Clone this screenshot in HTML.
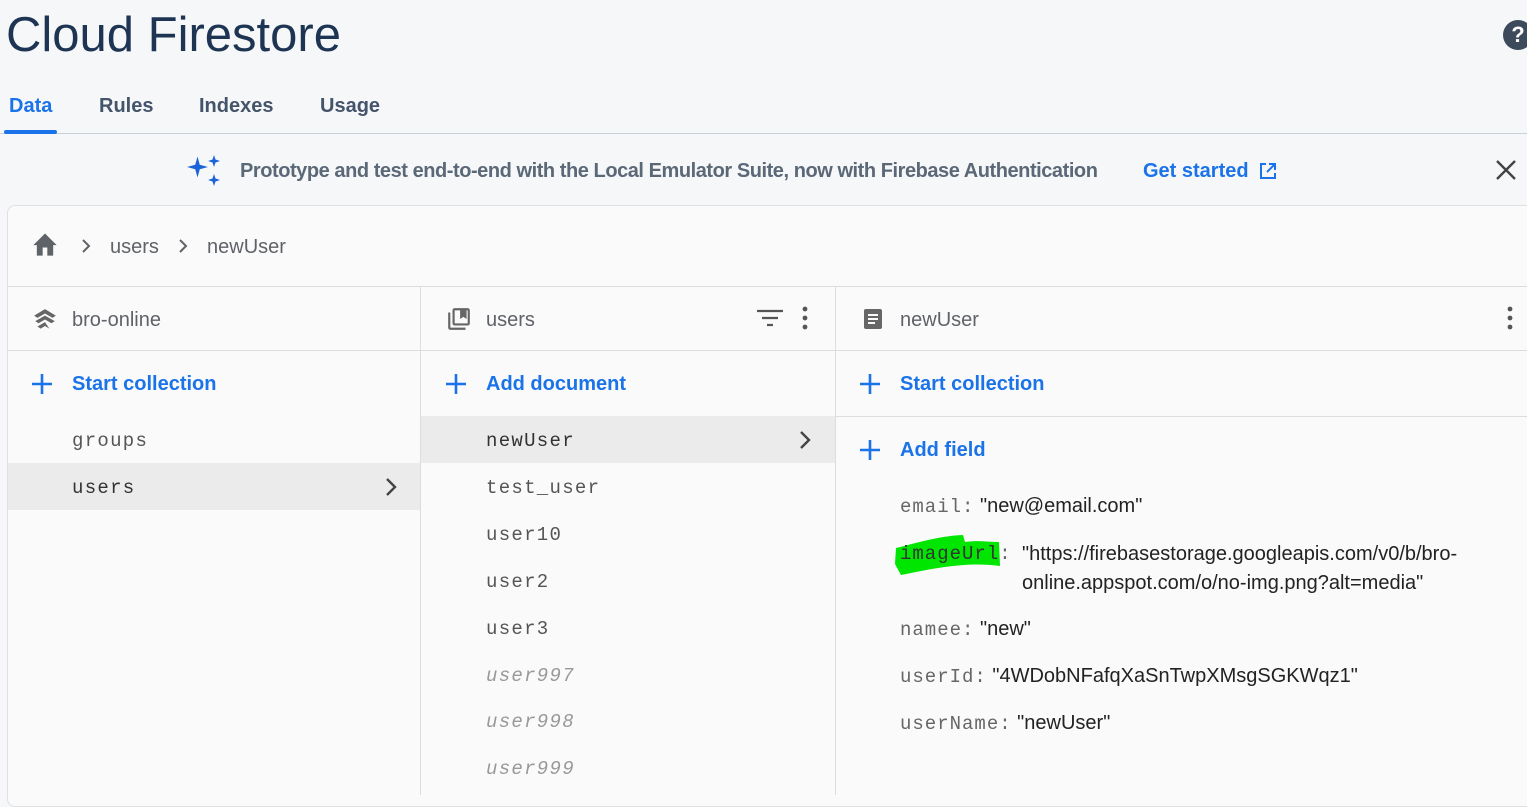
<!DOCTYPE html><html><head><style>
body{margin:0;width:1527px;height:795px;overflow:hidden;background:#f6f7f9;font-family:"Liberation Sans",sans-serif;position:relative}
.a{position:absolute;white-space:nowrap}
.mono{font-family:"Liberation Mono",monospace;font-size:19px;letter-spacing:1.3px;color:#333}
.blue{color:#1a73e8;font-size:20px}
.gray{color:#5f6368}
</style></head><body>
<div class="a" style="left:6px;top:7px;font-size:49px;color:#1d3553">Cloud Firestore</div>
<div class="a" style="left:1503px;top:20px;width:30px;height:30px;border-radius:50%;background:#3c4a5c;color:#fff;font-weight:bold;font-size:22px;text-align:center;line-height:30px">?</div>
<div class="a" style="left:9px;top:95px;font-size:20px;color:#1a73e8;font-weight:bold">Data</div>
<div class="a" style="left:99px;top:95px;font-size:20px;color:#44546a;font-weight:bold">Rules</div>
<div class="a" style="left:199px;top:95px;font-size:20px;color:#44546a;font-weight:bold">Indexes</div>
<div class="a" style="left:320px;top:95px;font-size:20px;color:#44546a;font-weight:bold">Usage</div>
<div class="a" style="left:0;top:133px;width:1527px;height:1px;background:#c9d2dc"></div>
<div class="a" style="left:4px;top:130px;width:53px;height:4px;background:#1a73e8;border-radius:2px"></div>
<svg class="a" style="left:187px;top:153px" width="36" height="34" viewBox="0 0 36 34"><path d="M14 2 L17 13 L28 16 L17 19 L14 30 L11 19 L0 16 L11 13Z" fill="#1a63d8" transform="translate(0,2) scale(.75)"/><path d="M27 2 L28.5 6.5 L33 8 L28.5 9.5 L27 14 L25.5 9.5 L21 8 L25.5 6.5Z" fill="#1a63d8"/><path d="M27 21 L28.5 25.5 L33 27 L28.5 28.5 L27 33 L25.5 28.5 L21 27 L25.5 25.5Z" fill="#1a63d8"/></svg>
<div class="a" style="left:240px;top:160px;font-size:20px;color:#5b6877;font-weight:bold;letter-spacing:-.45px">Prototype and test end-to-end with the Local Emulator Suite, now with Firebase Authentication</div>
<div class="a" style="left:1143px;top:160px;font-size:20px;color:#1a73e8;font-weight:bold">Get started</div>
<svg class="a" style="left:1258px;top:161px" width="20" height="20" viewBox="0 0 20 20" fill="none" stroke="#1a73e8" stroke-width="2"><path d="M8 3H3v14h14v-5M11 3h6v6M17 3L9 11"/></svg>
<svg class="a" style="left:1495px;top:159px" width="22" height="22" stroke="#444" stroke-width="2.4"><path d="M2 2L20 20M20 2L2 20"/></svg>
<div class="a" style="left:7px;top:205px;width:1530px;height:600px;background:#fafafa;border:1px solid #e0e0e0;border-radius:8px"></div>
<svg class="a" style="left:31px;top:231px" width="28" height="26" viewBox="0 0 24 22"><path d="M10 21v-7h4v7h5v-9h3L12 2 2 12h3v9z" fill="#5f6368"/></svg>
<svg class="a" style="left:81px;top:239px" width="10" height="14" fill="none" stroke="#5f6368" stroke-width="2"><path d="M2 1l6 6-6 6"/></svg>
<div class="a gray" style="left:110px;top:236px;font-size:20px">users</div>
<svg class="a" style="left:178px;top:239px" width="10" height="14" fill="none" stroke="#5f6368" stroke-width="2"><path d="M2 1l6 6-6 6"/></svg>
<div class="a gray" style="left:207px;top:236px;font-size:20px">newUser</div>
<div class="a" style="left:8px;top:286px;width:1519px;height:1px;background:#ddd"></div>
<div class="a" style="left:8px;top:350px;width:1519px;height:1px;background:#ddd"></div>
<div class="a" style="left:420px;top:287px;width:1px;height:508px;background:#ddd"></div>
<div class="a" style="left:835px;top:287px;width:1px;height:508px;background:#ddd"></div>
<div class="a" style="left:836px;top:416px;width:691px;height:1px;background:#ddd"></div>
<!-- col1 -->
<svg class="a" style="left:32px;top:307px" width="26" height="26" viewBox="0 0 24 24" fill="#666"><path d="M12 2L2 8l3 2 7-4 7 4 3-2z M12 8L3 13l3 2 6-3.5 6 3.5 3-2z M12 14l-7 4 3 2 4-2.5 4 2.5-2-3z"/></svg>
<div class="a gray" style="left:72px;top:309px;font-size:20px">bro-online</div>
<svg class="a" style="left:31px;top:373px" width="22" height="22" stroke="#1a73e8" stroke-width="2.6"><path d="M11 1v20M1 11h20"/></svg>
<div class="a blue" style="left:72px;top:373px;font-weight:bold">Start collection</div>
<div class="a mono" style="left:72px;top:430px;color:#555">groups</div>
<div class="a" style="left:8px;top:463px;width:412px;height:47px;background:#ebebeb"></div>
<div class="a mono" style="left:72px;top:477px">users</div>
<svg class="a" style="left:385px;top:478px" width="12" height="18" fill="none" stroke="#444" stroke-width="2.4"><path d="M2 1l8 8-8 8"/></svg>
<!-- col2 -->
<svg class="a" style="left:446px;top:306px" width="26" height="26" viewBox="0 0 24 24" fill="#666"><path d="M4 6H2v14a2 2 0 002 2h14v-2H4z M20 2H8a2 2 0 00-2 2v12a2 2 0 002 2h12a2 2 0 002-2V4a2 2 0 00-2-2zm0 14H8V4h5v8l3-2 3 2V4h1z"/></svg>
<div class="a gray" style="left:486px;top:309px;font-size:20px">users</div>
<svg class="a" style="left:756px;top:308px" width="28" height="22" stroke="#555" stroke-width="2.2"><path d="M1 3h26M6 10h16M11 17h6"/></svg>
<svg class="a" style="left:800px;top:305px" width="10" height="26" fill="#555"><circle cx="5" cy="4" r="2.4"/><circle cx="5" cy="13" r="2.4"/><circle cx="5" cy="22" r="2.4"/></svg>
<svg class="a" style="left:445px;top:373px" width="22" height="22" stroke="#1a73e8" stroke-width="2.6"><path d="M11 1v20M1 11h20"/></svg>
<div class="a blue" style="left:486px;top:373px;font-weight:bold">Add document</div>
<div class="a" style="left:421px;top:416px;width:414px;height:47px;background:#ebebeb"></div>
<div class="a mono" style="left:486px;top:430px">newUser</div>
<svg class="a" style="left:799px;top:431px" width="12" height="18" fill="none" stroke="#444" stroke-width="2.4"><path d="M2 1l8 8-8 8"/></svg>
<div class="a mono" style="left:486px;top:477px;color:#555">test_user</div>
<div class="a mono" style="left:486px;top:524px;color:#555">user10</div>
<div class="a mono" style="left:486px;top:571px;color:#555">user2</div>
<div class="a mono" style="left:486px;top:618px;color:#555">user3</div>
<div class="a mono" style="left:486px;top:665px;color:#999;font-style:italic">user997</div>
<div class="a mono" style="left:486px;top:711px;color:#999;font-style:italic">user998</div>
<div class="a mono" style="left:486px;top:758px;color:#999;font-style:italic">user999</div>
<!-- col3 -->
<svg class="a" style="left:861px;top:307px" width="24" height="24" viewBox="0 0 24 24" fill="#666"><path d="M19 2H5a2 2 0 00-2 2v16a2 2 0 002 2h14a2 2 0 002-2V4a2 2 0 00-2-2zM7 7h10v2H7zm0 4h10v2H7zm0 4h7v2H7z"/></svg>
<div class="a gray" style="left:900px;top:309px;font-size:20px">newUser</div>
<svg class="a" style="left:1505px;top:305px" width="10" height="26" fill="#555"><circle cx="5" cy="4" r="2.4"/><circle cx="5" cy="13" r="2.4"/><circle cx="5" cy="22" r="2.4"/></svg>
<svg class="a" style="left:859px;top:373px" width="22" height="22" stroke="#1a73e8" stroke-width="2.6"><path d="M11 1v20M1 11h20"/></svg>
<div class="a blue" style="left:900px;top:373px;font-weight:bold">Start collection</div>
<svg class="a" style="left:859px;top:439px" width="22" height="22" stroke="#1a73e8" stroke-width="2.6"><path d="M11 1v20M1 11h20"/></svg>
<div class="a blue" style="left:900px;top:439px;font-weight:bold">Add field</div>
<div class="a" style="left:900px;top:495px;font-size:20px;color:#222"><span class="mono" style="color:#666;letter-spacing:1px">email:</span> "new@email.com"</div>
<svg class="a" style="left:893px;top:534px" width="112" height="42"><path d="M3 14 C20 10,45 2,70 1 L72 8 C85 6,95 8,106 8 L107 32 C80 28,50 32,8 41 L2 30 Z" fill="#00e600"/></svg>
<div class="a mono" style="left:900px;top:543px;color:#333;letter-spacing:1px">imageUrl<span style="color:#666">:</span></div>
<div class="a" style="left:1022px;top:540px;font-size:20px;color:#222;line-height:29px">"https://firebasestorage.googleapis.com/v0/b/bro-<br>online.appspot.com/o/no-img.png?alt=media"</div>
<div class="a" style="left:900px;top:618px;font-size:20px;color:#222"><span class="mono" style="color:#666;letter-spacing:1px">namee:</span> "new"</div>
<div class="a" style="left:900px;top:665px;font-size:20px;color:#222"><span class="mono" style="color:#666;letter-spacing:1px">userId:</span> "4WDobNFafqXaSnTwpXMsgSGKWqz1"</div>
<div class="a" style="left:900px;top:712px;font-size:20px;color:#222"><span class="mono" style="color:#666;letter-spacing:1px">userName:</span> "newUser"</div>
</body></html>
